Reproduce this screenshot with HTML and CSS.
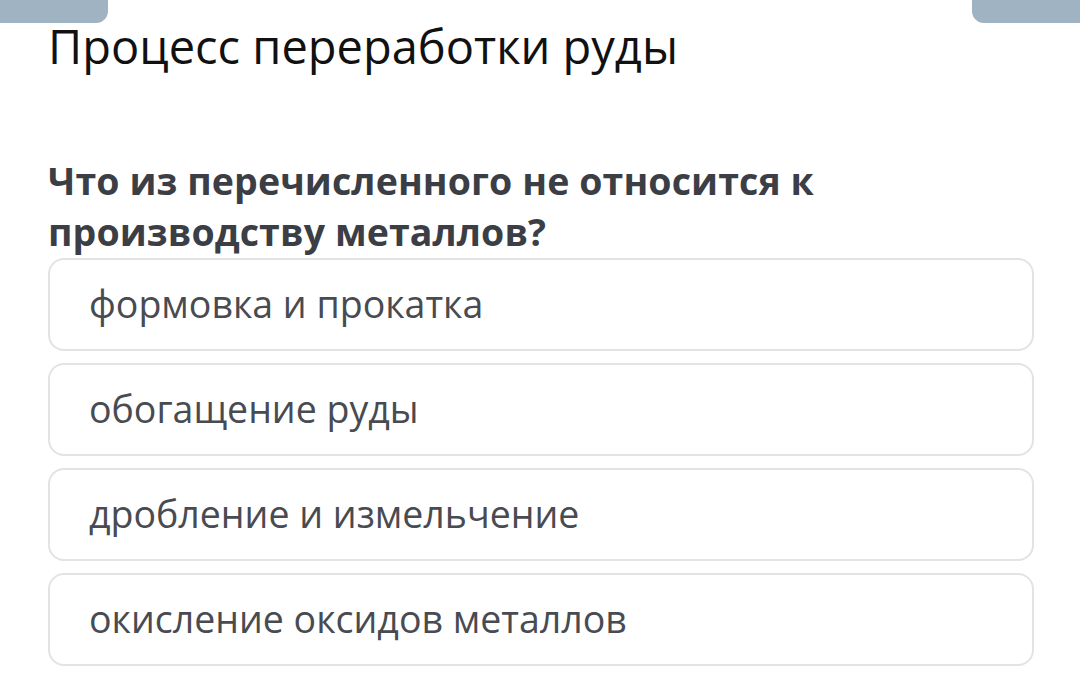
FILE: index.html
```html
<!DOCTYPE html>
<html lang="ru">
<head>
	<meta charset="utf-8">
	<title>Процесс переработки руды</title>
	<link rel="stylesheet" href="styles.css">
</head>
<body>
	<div class="topbar">
		<i class="tab tab_l"></i>
		<i class="tab tab_r"></i>
	</div>
	<div class="quiz">
		<h1 class="title">Процесс переработки руды</h1>
		<p class="question">Что из перечисленного не относится к производству металлов?</p>
		<ul class="answers">
			<li>формовка и прокатка</li>
			<li>обогащение руды</li>
			<li>дробление и измельчение</li>
			<li>окисление оксидов металлов</li>
		</ul>
	</div>
</body>
</html>
```

FILE: styles.css
```css
*{margin:0;padding:0;}
body{background:#FFF;font-family:"Open Sans","Noto Sans",sans-serif;}

.topbar{display:flex;justify-content:space-between;height:23px;}
.topbar .tab{display:block;width:108px;height:23px;background:#9FB3C3;}
.topbar .tab_l{border-radius:0 0 12px 0;}
.topbar .tab_r{border-radius:0 0 0 12px;}

.quiz{padding:0 46px 0 48px;}
.title{font-size:47px;font-weight:400;line-height:56px;color:#111;margin-top:-5px;}
.question{margin-top:81px;width:840px;font-size:37.5px;font-weight:700;line-height:51px;letter-spacing:0.1px;color:#3B3E45;}

.answers{list-style:none;display:flex;flex-direction:column;gap:12px;margin-top:1px;}
.answers li{height:93px;box-sizing:border-box;display:flex;align-items:center;padding:0 0 3px 39px;border:2px solid #E3E3E3;border-radius:16px;font-size:37.5px;color:#484B51;}
```
